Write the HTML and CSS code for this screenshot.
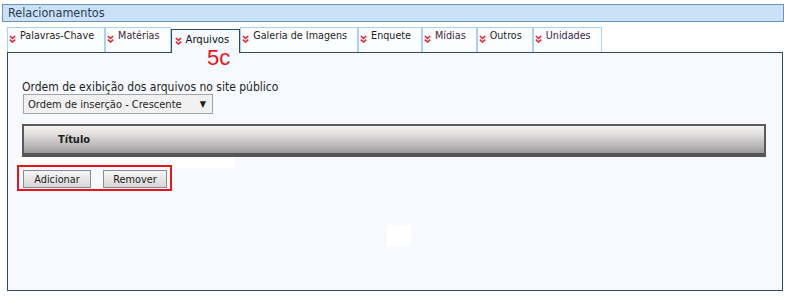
FILE: index.html
```html
<!DOCTYPE html>
<html lang="pt">
<head>
<meta charset="utf-8">
<title>Relacionamentos</title>
<link rel="stylesheet" href="styles.css">
</head>
<body>
<div class="page">
  <div class="section-title">Relacionamentos</div>
  <ul class="tabs">
    <li class="tab"><svg class="ico" viewBox="0 0 7 8"><polyline points="0.8,1 3.5,3.4 6.2,1"/><polyline points="0.8,4.6 3.5,7 6.2,4.6"/></svg>Palavras-Chave</li>
    <li class="tab visited"><svg class="ico" viewBox="0 0 7 8"><polyline points="0.8,1 3.5,3.4 6.2,1"/><polyline points="0.8,4.6 3.5,7 6.2,4.6"/></svg>Matérias</li>
    <li class="tab active"><svg class="ico" viewBox="0 0 7 8"><polyline points="0.8,1 3.5,3.4 6.2,1"/><polyline points="0.8,4.6 3.5,7 6.2,4.6"/></svg>Arquivos</li>
    <li class="tab"><svg class="ico" viewBox="0 0 7 8"><polyline points="0.8,1 3.5,3.4 6.2,1"/><polyline points="0.8,4.6 3.5,7 6.2,4.6"/></svg>Galeria de Imagens</li>
    <li class="tab"><svg class="ico" viewBox="0 0 7 8"><polyline points="0.8,1 3.5,3.4 6.2,1"/><polyline points="0.8,4.6 3.5,7 6.2,4.6"/></svg>Enquete</li>
    <li class="tab visited"><svg class="ico" viewBox="0 0 7 8"><polyline points="0.8,1 3.5,3.4 6.2,1"/><polyline points="0.8,4.6 3.5,7 6.2,4.6"/></svg>Mídias</li>
    <li class="tab"><svg class="ico" viewBox="0 0 7 8"><polyline points="0.8,1 3.5,3.4 6.2,1"/><polyline points="0.8,4.6 3.5,7 6.2,4.6"/></svg>Outros</li>
    <li class="tab visited"><svg class="ico" viewBox="0 0 7 8"><polyline points="0.8,1 3.5,3.4 6.2,1"/><polyline points="0.8,4.6 3.5,7 6.2,4.6"/></svg>Unidades</li>
  </ul>
  <div class="panel">
    <span class="annot-label">5c</span>
    <label class="field-label">Ordem de exibição dos arquivos no site público</label>
    <div class="select"><span>Ordem de inserção - Crescente</span><span class="arrow">▼</span></div>
    <div class="grid-head"><span class="col-title">Título</span></div>
    <div class="grid-empty"></div>
    <div class="actions">
      <button class="btn btn-add">Adicionar</button>
      <button class="btn btn-rem">Remover</button>
    </div>
    <div class="annot-box"></div>
    <div class="blank"></div>
  </div>
</div>
</body>
</html>
```
FILE: styles.css
```css
* { box-sizing: border-box; }
html, body { margin: 0; padding: 0; background: #ffffff; }
body {
  font-family: "DejaVu Sans Condensed", "DejaVu Sans", sans-serif;
  font-size: 11px;
  color: #1e1e1e;
}
.page { padding: 4px 7px 0 2px; width: 791px; }

.section-title {
  height: 18px;
  border: 1px solid #6e91b8;
  background: #cbe1f7;
  color: #283c54;
  font-size: 12.5px;
  line-height: 15px;
  padding-left: 5px;
}

.tabs {
  list-style: none;
  margin: 5px 0 0 5px;
  padding: 0;
  display: flex;
  align-items: flex-end;
  height: 25px;
  position: relative;
  z-index: 2;
}
.tab {
  height: 25px;
  border: 1px solid #a9d0f6;
  border-bottom: none;
  background: #fcfdff;
  padding: 1px 10px 0 1px;
  display: flex;
  align-items: flex-start;
  white-space: nowrap;
  color: #1e1e1e;
  font-size: 10.7px;
  line-height: 14px;
}
.tab.visited { color: #3d2540; }
.tab.active {
  height: 24px;
  margin-bottom: -1px;
  border-color: #2c4a6b;
  background: #f6faff;
  padding: 3px 10px 0 3px;
  color: #111;
  font-size: 11.2px;
}
.ico {
  width: 7px;
  height: 8px;
  margin: 6px 4px 0 0;
  fill: none;
  stroke: #e3262f;
  stroke-width: 1.6;
  flex: none;
}
.tab.active .ico { margin-top: 4px; }

.panel {
  position: relative;
  margin-left: 5px;
  width: 776px;
  height: 239px;
  border: 1px solid #2c4a6b;
  background: #f6faff;
  padding: 27px 0 0 14px;
}
.annot-label {
  position: absolute;
  left: 199px;
  top: -3px;
  color: #e8131b;
  font-family: "Liberation Sans", Arial, sans-serif;
  font-size: 22px;
  line-height: 16px;
  z-index: 3;
}
.field-label {
  display: block;
  font-size: 12px;
  line-height: 14px;
  color: #1e1e1e;
}
.select {
  margin: 0 0 0 1px;
  width: 190px;
  height: 20px;
  border: 1px solid #a3a3a3;
  background: #f2f1f1;
  display: flex;
  justify-content: space-between;
  align-items: center;
  padding: 0 6px 0 4px;
  font-size: 11px;
}
.arrow { font-size: 9px; color: #222; }

.grid-head {
  margin-top: 10px;
  width: 744px;
  height: 33px;
  border: 2px solid #5b5b5b;
  border-bottom-width: 4px;
  border-bottom-color: #555;
  background: linear-gradient(#f4f1f0 0%, #e2e0df 30%, #b6b4b4 75%, #9b9999 100%);
  padding: 7px 0 0 34px;
}
.col-title { font-weight: bold; font-size: 11px; color: #1e1e1e; }

.grid-empty {
  margin-left: -7px;
  width: 219px;
  height: 11px;
  background: #ffffff;
}

.actions {
  margin-top: 2px;
  display: flex;
  gap: 12px;
  padding-left: 1px;
}
.btn {
  height: 18px;
  border: 1px solid #8c8c8c;
  background: linear-gradient(#f6f5f5, #d9d7d7);
  font-family: "DejaVu Sans Condensed", "DejaVu Sans", sans-serif;
  font-size: 10.8px;
  color: #1e1e1e;
  padding: 0;
}
.btn-add { width: 68px; }
.btn-rem { width: 64px; }

.annot-box {
  position: absolute;
  left: 9px;
  top: 112px;
  width: 155px;
  height: 26px;
  border: 2px solid #e8131b;
}
.blank {
  position: absolute;
  left: 379px;
  top: 172px;
  width: 24px;
  height: 21px;
  background: #ffffff;
}
```
